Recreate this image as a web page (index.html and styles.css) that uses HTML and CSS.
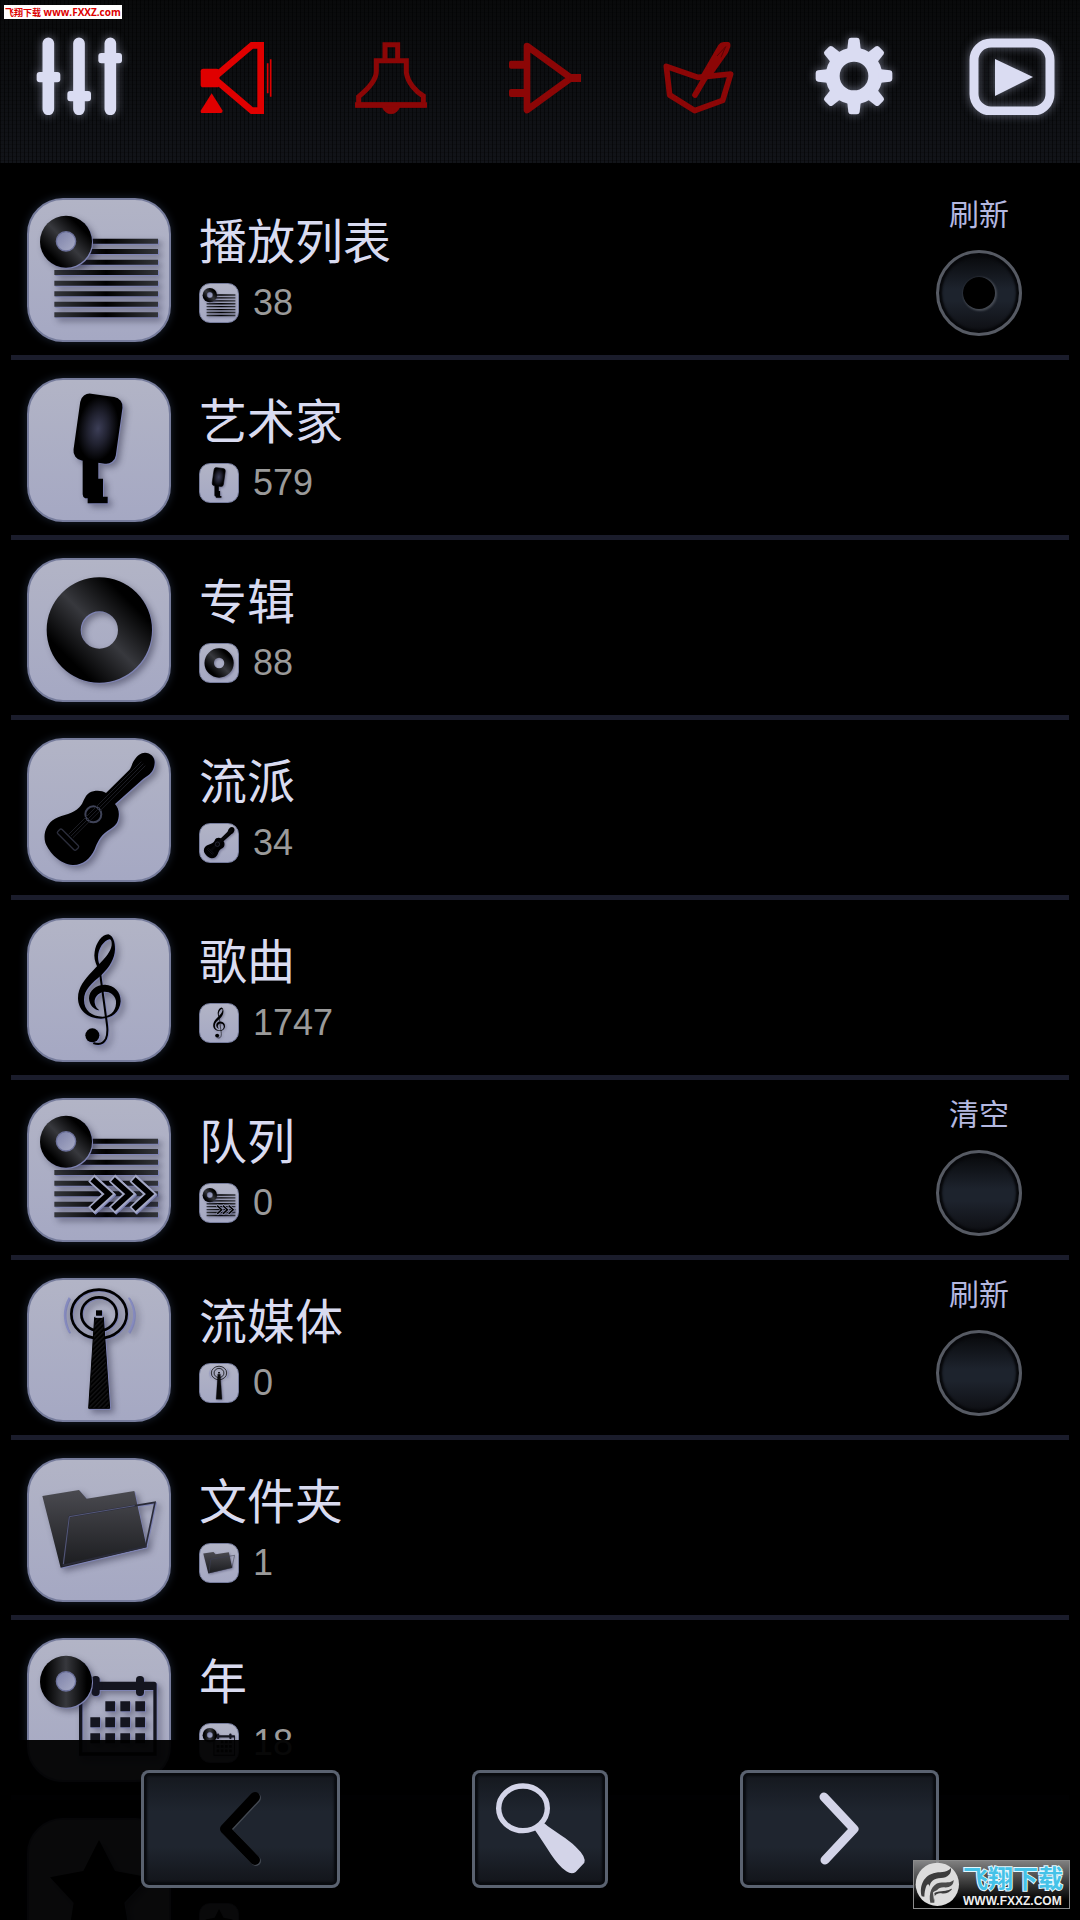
FILE: index.html
```html
<!DOCTYPE html>
<html lang="zh-CN">

<head>
    <meta charset="UTF-8">
    <meta name="viewport" content="width=device-width, initial-scale=1.0">
    <title>播放列表</title>
    <link rel="stylesheet" href="styles.css">
</head>

<body>
    <!-- Shared artwork -->
    <svg class="sprite" width="0" height="0" aria-hidden="true">
        <defs>
            <linearGradient id="vinyl" x1="0.1" y1="0.9" x2="0.9" y2="0.1">
                <stop offset="0.15" stop-color="#000" />
                <stop offset="0.5" stop-color="#37383d" />
                <stop offset="0.85" stop-color="#000" />
            </linearGradient>
            <linearGradient id="vinylYear">
                <stop offset="0.1" stop-color="#000" />
                <stop offset="0.5" stop-color="#37383d" />
                <stop offset="0.9" stop-color="#000" />
            </linearGradient>
            <linearGradient id="hole" x1="0" y1="0" x2="1" y2="1">
                <stop offset="0" stop-color="#7b80a8" />
                <stop offset="1" stop-color="#a9acc6" />
            </linearGradient>
            <linearGradient id="bar">
                <stop offset="0" stop-color="#33353a" />
                <stop offset="0.5" stop-color="#000" />
                <stop offset="1" stop-color="#33353a" />
            </linearGradient>
            <radialGradient id="micHead">
                <stop offset="0" stop-color="#3c3e57" />
                <stop offset="0.5" stop-color="#20212f" />
                <stop offset="1" stop-color="#000" />
            </radialGradient>
            <linearGradient id="folderBack" x1="0" y1="0" x2="0" y2="1">
                <stop offset="0" stop-color="#4a4a50" />
                <stop offset="1" stop-color="#1b1c1f" />
            </linearGradient>
            <pattern id="hatch" width="10" height="10" patternUnits="userSpaceOnUse" patternTransform="rotate(45)">
                <rect width="10" height="10" fill="#000" />
                <rect width="4" height="10" fill="#141416" />
            </pattern>
        </defs>

        <symbol id="lines" viewBox="81 54 432 432">
            <path fill="url(#bar)" d="M198 176h276v15H198zM198 207h276v15H198zM198 239h276v15H198zM163 270h311v15H163zM163 302h311v15H163zM163 334h311v15H163zM163 365h311v15H163zM163 397h311v15H163z" />
        </symbol>

        <symbol id="smallDisc" viewBox="81 54 432 432">
            <circle cx="198" cy="185" r="78" fill="url(#vinyl)" />
            <circle cx="198" cy="184" r="29" fill="url(#hole)" stroke="#6d729c" stroke-width="4" />
        </symbol>

        <symbol id="mic" viewBox="81 594 432 432">
            <path d="M248 830h47v66h14v54h14v20h-60v-15h-7q-8-3-8-12z" />
            <rect x="233" y="648" width="122" height="196" rx="26" fill="url(#micHead)" stroke="#000" stroke-width="6" transform="rotate(8 294 746)" />
        </symbol>

        <symbol id="disc" viewBox="81 54 432 432">
            <path fill="url(#vinyl)" fill-rule="evenodd" d="M140 270a158 158 0 1 0 316 0a158 158 0 1 0-316 0zM242 270a56 56 0 1 1 112 0a56 56 0 1 1-112 0z" />
        </symbol>

        <symbol id="guitar" viewBox="81 594 432 432">
            <path d="M435 638C452 638 465 652 464 668C463 684 458 694 447 704L430 716L345 792C355 803 359 818 355 836C351 856 338 862 322 873C300 888 292 908 284 928C270 958 248 976 218 975C180 972 148 938 136 908C128 880 140 850 165 836C190 824 220 822 238 802C252 788 252 768 268 758C284 750 304 750 318 759L384 694C396 684 394 672 403 660C412 647 422 638 435 638Z" />
            <circle cx="280" cy="823" r="24" fill="none" stroke="#3f4358" stroke-width="6" />
            <rect x="165" y="890" width="78" height="18" rx="5" fill="none" stroke="#2b2d3b" stroke-width="4" transform="rotate(45 204 899)" />
            <path d="M206 883L424 665M213 888L430 671M219 893L436 677" fill="none" stroke="#1c1d24" stroke-width="3" />
        </symbol>

        <symbol id="clef" viewBox="81 54 432 432">
            <path fill-rule="evenodd" d="M325 103C338 106 346 126 345 148C344 177 328 202 305 224C275 250 252 268 252 300C252 332 275 349 308 350C338 348 350 325 348 302C344 282 328 274 312 275C294 278 282 292 284 308C286 320 292 326 298 331C282 330 268 315 267 295C267 272 288 254 315 254C343 256 362 275 362 304C360 336 335 356 303 356C260 355 234 328 234 294C234 262 254 238 275 216L291 199C285 185 281 170 284 155C288 130 305 103 325 103ZM328 118C312 122 294 145 294 172C294 180 296 188 298 192C315 175 332 156 335 136C336 126 334 118 328 118Z" />
            <path d="M297 195L317 345C322 378 325 398 318 416C310 432 296 435 280 429" fill="none" stroke="#000" stroke-width="6" />
            <circle cx="277" cy="406" r="21" />
        </symbol>

        <symbol id="arrows" viewBox="81 54 432 432">
            <g fill="none" stroke="#a4a8c4" stroke-width="28">
                <path d="M274 294L326 342L274 391" />
                <path d="M336 294L388 342L336 391" />
                <path d="M398 294L450 342L398 391" />
            </g>
            <g fill="none" stroke="#000" stroke-width="17">
                <path d="M277 298L326 342L277 387" />
                <path d="M339 298L388 342L339 387" />
                <path d="M401 298L450 342L401 387" />
            </g>
        </symbol>

        <symbol id="antenna" viewBox="81 54 432 432">
            <g fill="none" stroke="#000" stroke-width="8">
                <ellipse cx="297" cy="162" rx="83" ry="73" />
                <ellipse cx="297" cy="162" rx="53" ry="50" />
            </g>
            <path d="M208 113Q180 165 208 217M386 113Q418 165 386 217" fill="none" stroke="#858abf" stroke-width="5" />
            <path d="M284 172h26l19 273h-63z" fill="url(#hatch)" stroke="#000" stroke-width="3" />
            <path d="M286 171h22" stroke="#a9acc6" stroke-width="5" />
            <rect x="288" y="151" width="18" height="16" />
        </symbol>

        <symbol id="folder" viewBox="81 594 432 432">
            <path d="M127 708L237 690L260 716L403 693L440 862L182 923Z" fill="url(#folderBack)" />
            <path d="M208 770L465 727L437 860L190 916Z" fill="none" stroke="#2a2b38" stroke-width="5" />
            <path d="M190 912L208 770L404 737" fill="none" stroke="#54587a" stroke-width="3" />
        </symbol>

        <symbol id="calendar" viewBox="81 54 432 432">
            <g fill="#14151f">
                <path fill-rule="evenodd" d="M245 185h217q8 0 8 8v214H237V193q0-8 8-8zM247 210v187h213V210z" />
                <rect x="275" y="168" width="24" height="60" rx="11" />
                <rect x="408" y="168" width="24" height="60" rx="11" />
                <path d="M316 244h29v30h-29zM361 244h29v30h-29zM406 244h29v30h-29zM271 292h29v30h-29zM316 292h29v30h-29zM361 292h29v30h-29zM406 292h29v30h-29zM271 340h29v30h-29zM316 340h29v30h-29zM361 340h29v30h-29zM406 340h29v30h-29z" />
            </g>
        </symbol>

        <symbol id="yearDisc" viewBox="81 54 432 432">
            <circle cx="198" cy="185" r="78" fill="url(#vinylYear)" />
            <circle cx="198" cy="184" r="29" fill="url(#hole)" stroke="#6d729c" stroke-width="4" />
        </symbol>

        <symbol id="star" viewBox="81 54 432 432">
            <path d="M297 120L345 213L445 232L373 308L390 410L297 362L205 410L221 308L150 232L250 213Z" />
        </symbol>
    </svg>

    <div class="app">
        <header class="toolbar">
            <button type="button" class="tool tool--light tool--first" aria-label="均衡器">
                <svg viewBox="108 108 258 234" width="86" height="78">
                    <path d="M145 127v198M237 127v198M331 127v198" stroke-width="35" stroke-linecap="round" />
                    <rect x="110" y="213" width="71" height="31" rx="9" />
                    <rect x="202" y="270" width="71" height="31" rx="9" />
                    <rect x="295" y="156" width="71" height="31" rx="9" />
                </svg>
            </button>
            <button type="button" class="tool tool--on" aria-label="扬声器">
                <svg viewBox="600 126 216 216" width="72" height="72">
                    <rect x="602" y="206" width="56" height="56" rx="8" />
                    <path d="M650 226L756 136H782V332H756L650 242" fill="none" stroke-width="20" />
                    <path d="M635 280L668 332Q668 339 662 339H604Q600 338 603 331Z" />
                    <path d="M803 190v90M812 178v112" stroke-width="5" />
                </svg>
            </button>
            <button type="button" class="tool tool--off" aria-label="铃声">
                <svg viewBox="1062 126 216 216" width="72" height="72">
                    <g fill="none" stroke-width="15">
                        <path d="M1152 182V134H1190V182" />
                        <path d="M1126 182H1216V218C1220 248 1246 276 1267 288V315H1073V290C1100 268 1126 240 1126 214Z" />
                        <path d="M1062 315h216" stroke-width="17" />
                    </g>
                    <path d="M1142 320h56q-10 22-28 22t-28-22z" />
                </svg>
            </button>
            <button type="button" class="tool tool--off" aria-label="放大器">
                <svg viewBox="84 66 216 216" width="72" height="72">
                    <path d="M138 78L270 174L138 270Z" fill="none" stroke-width="20" stroke-linejoin="round" />
                    <path d="M90 122h40v24H90q-6 0-6-6v-12q0-6 6-6zM90 207h40v24H90q-6 0-6-6v-12q0-6 6-6zM266 162h34v24h-34z" />
                </svg>
            </button>
            <button type="button" class="tool tool--off" aria-label="混音">
                <svg viewBox="550 66 216 216" width="72" height="72">
                    <g fill="none" stroke-width="17" stroke-linejoin="round" stroke-linecap="round">
                        <path d="M560 139L655 172L753 162L729 241L645 272L570 225Z" />
                        <path d="M646 225L732 78" />
                    </g>
                    <path d="M660 172L716 75Q722 66 732 66H746Q754 68 752 80L745 98L696 168Z" />
                    <path d="M712 108L738 80L724 112" fill="none" class="tool__groove" stroke-width="3" />
                </svg>
            </button>
            <button type="button" class="tool tool--light" aria-label="设置">
                <svg viewBox="1002 51 234 234" width="78" height="78">
                    <circle cx="1119" cy="168" r="64" fill="none" stroke-width="42" />
                    <g id="teeth">
                        <path id="tooth" d="M1098 95L1102 60Q1103 53 1110 53H1128Q1135 53 1136 60L1140 95Z" />
                        <use href="#tooth" transform="rotate(45 1119 168)" />
                        <use href="#tooth" transform="rotate(90 1119 168)" />
                        <use href="#tooth" transform="rotate(135 1119 168)" />
                    </g>
                    <use href="#teeth" transform="rotate(180 1119 168)" />
                </svg>
            </button>
            <button type="button" class="tool tool--light tool--last" aria-label="正在播放">
                <svg viewBox="0 0 86 78" width="86" height="78">
                    <rect x="5" y="6" width="76" height="68" rx="17" fill="none" stroke-width="9" />
                    <path d="M26 22L64 40L26 59Z" />
                </svg>
            </button>
        </header>

        <main class="library">
            <ul>
                <li class="row">
                    <a href="#playlists" class="row__link">
                        <span class="tile"><svg><use href="#lines" /></svg><svg><use href="#smallDisc" /></svg></span>
                        <span class="row__text">
                            <span class="row__title">播放列表</span>
                            <span class="row__meta">
                                <span class="tile tile--small"><svg><use href="#lines" /></svg><svg><use href="#smallDisc" /></svg></span>
                                <span class="row__count">38</span>
                            </span>
                        </span>
                    </a>
                    <div class="action">
                        <label for="refreshPlaylists">刷新</label>
                        <button type="button" id="refreshPlaylists" class="knob knob--lit"></button>
                    </div>
                </li>
                <li class="row">
                    <a href="#artists" class="row__link">
                        <span class="tile"><svg><use href="#mic" /></svg></span>
                        <span class="row__text">
                            <span class="row__title">艺术家</span>
                            <span class="row__meta">
                                <span class="tile tile--small"><svg><use href="#mic" /></svg></span>
                                <span class="row__count">579</span>
                            </span>
                        </span>
                    </a>
                </li>
                <li class="row">
                    <a href="#albums" class="row__link">
                        <span class="tile"><svg><use href="#disc" /></svg></span>
                        <span class="row__text">
                            <span class="row__title">专辑</span>
                            <span class="row__meta">
                                <span class="tile tile--small"><svg><use href="#disc" /></svg></span>
                                <span class="row__count">88</span>
                            </span>
                        </span>
                    </a>
                </li>
                <li class="row">
                    <a href="#genres" class="row__link">
                        <span class="tile"><svg><use href="#guitar" /></svg></span>
                        <span class="row__text">
                            <span class="row__title">流派</span>
                            <span class="row__meta">
                                <span class="tile tile--small"><svg><use href="#guitar" /></svg></span>
                                <span class="row__count">34</span>
                            </span>
                        </span>
                    </a>
                </li>
                <li class="row">
                    <a href="#songs" class="row__link">
                        <span class="tile"><svg><use href="#clef" /></svg></span>
                        <span class="row__text">
                            <span class="row__title">歌曲</span>
                            <span class="row__meta">
                                <span class="tile tile--small"><svg><use href="#clef" /></svg></span>
                                <span class="row__count">1747</span>
                            </span>
                        </span>
                    </a>
                </li>
                <li class="row">
                    <a href="#queue" class="row__link">
                        <span class="tile"><svg><use href="#lines" /></svg><svg><use href="#smallDisc" /></svg><svg><use href="#arrows" /></svg></span>
                        <span class="row__text">
                            <span class="row__title">队列</span>
                            <span class="row__meta">
                                <span class="tile tile--small"><svg><use href="#lines" /></svg><svg><use href="#smallDisc" /></svg><svg><use href="#arrows" /></svg></span>
                                <span class="row__count">0</span>
                            </span>
                        </span>
                    </a>
                    <div class="action">
                        <label for="clearQueue">清空</label>
                        <button type="button" id="clearQueue" class="knob"></button>
                    </div>
                </li>
                <li class="row">
                    <a href="#streams" class="row__link">
                        <span class="tile"><svg><use href="#antenna" /></svg></span>
                        <span class="row__text">
                            <span class="row__title">流媒体</span>
                            <span class="row__meta">
                                <span class="tile tile--small"><svg><use href="#antenna" /></svg></span>
                                <span class="row__count">0</span>
                            </span>
                        </span>
                    </a>
                    <div class="action">
                        <label for="refreshStreams">刷新</label>
                        <button type="button" id="refreshStreams" class="knob"></button>
                    </div>
                </li>
                <li class="row">
                    <a href="#folders" class="row__link">
                        <span class="tile"><svg><use href="#folder" /></svg></span>
                        <span class="row__text">
                            <span class="row__title">文件夹</span>
                            <span class="row__meta">
                                <span class="tile tile--small"><svg><use href="#folder" /></svg></span>
                                <span class="row__count">1</span>
                            </span>
                        </span>
                    </a>
                </li>
                <li class="row">
                    <a href="#years" class="row__link">
                        <span class="tile"><svg><use href="#calendar" /></svg><svg><use href="#yearDisc" /></svg></span>
                        <span class="row__text">
                            <span class="row__title">年</span>
                            <span class="row__meta">
                                <span class="tile tile--small"><svg><use href="#calendar" /></svg><svg><use href="#yearDisc" /></svg></span>
                                <span class="row__count">18</span>
                            </span>
                        </span>
                    </a>
                </li>
                <li class="row">
                    <a href="#ratings" class="row__link" aria-label="评分">
                        <span class="tile"><svg><use href="#star" /></svg></span>
                        <span class="row__text">
                            <span class="row__title"></span>
                            <span class="row__meta">
                                <span class="tile tile--small"><svg><use href="#star" /></svg></span>
                            </span>
                        </span>
                    </a>
                </li>
            </ul>
        </main>

        <nav class="pager">
            <button type="button" class="key key--wide" aria-label="上一页">
                <svg viewBox="0 0 199 118">
                    <path d="M115 28L85 60L115 91" stroke="#434952" />
                    <path d="M114 27L84 59L114 90" stroke="#000" />
                </svg>
            </button>
            <button type="button" class="key" aria-label="搜索">
                <svg viewBox="97 90 408 354">
                    <ellipse cx="250" cy="205" rx="73" ry="67" stroke="#d3d4e8" stroke-width="16" />
                    <path d="M284 268Q300 262 312 248C345 276 385 296 408 320Q440 350 434 368L408 396Q396 404 380 394C345 370 325 325 284 268Z" fill="#d3d4e8" />
                </svg>
            </button>
            <button type="button" class="key key--wide" aria-label="下一页">
                <svg viewBox="0 0 199 118">
                    <path d="M84 27L114 59L85 90" stroke="#d3d4e8" stroke-width="9" />
                </svg>
            </button>
        </nav>

        <p class="source-tag"><span class="source-tag__name">飞翔下载</span> www.FXXZ.com</p>

        <div class="badge">
            <svg viewBox="0 0 135 135" width="45" height="45" aria-hidden="true">
                <circle cx="67" cy="67" r="65" fill="#dcdcdc" />
                <path d="M20 103C12 72 26 38 62 32C82 29 96 32 108 18C110 36 98 47 78 48C56 49 46 58 44 74C40 58 30 70 28 104Z" fill="#3c3c3c" />
                <path d="M46 122C40 94 50 66 74 62C92 60 106 64 116 54C116 70 104 78 86 76C68 76 58 88 58 122Z" fill="#4a4a4a" />
                <path d="M56 92C70 80 92 92 116 74C112 92 94 98 80 96C68 94 62 100 58 108Z" fill="#3c3c3c" stroke="#dcdcdc" stroke-width="4" />
            </svg>
            <p class="badge__text">
                <span class="badge__name">飞翔下载</span>
                <span class="badge__url">WWW.FXXZ.COM</span>
            </p>
        </div>
    </div>
</body>

</html>
```
FILE: styles.css
```css
:root {
    --light: #dadcf2;
    --ink: #d9dbf0;
    --muted: #9a9a9a;
    --divider: #1a1c2b;
    --edge: #5a6270;
}

* {
    box-sizing: border-box;
}

body {
    background-color: #000;
    color: var(--ink);
    font-family: "Liberation Sans", "Noto Sans CJK SC", sans-serif;
    margin: 0;
}

button {
    background: none;
    border: 0;
    font: inherit;
    padding: 0;
}

ul {
    list-style: none;
    margin: 0;
    padding: 0;
}

p {
    margin: 0;
}

svg {
    display: block;
}

.sprite {
    position: absolute;
}

.app {
    display: flex;
    flex-direction: column;
    height: 100vh;
    overflow: hidden;
    position: relative;
}

/* Toolbar */

.toolbar {
    align-items: center;
    background:
        repeating-linear-gradient(90deg, rgba(0, 0, 0, 0.5) 0 1px, transparent 1px 4px),
        repeating-linear-gradient(rgba(0, 0, 0, 0.2) 0 1px, transparent 1px 4px),
        linear-gradient(#090a0b, #121419);
    display: flex;
    flex: none;
    height: 163px;
    padding-bottom: 12px;
}

.tool {
    display: flex;
    flex: 1;
    justify-content: center;
}

.tool svg {
    fill: currentColor;
    stroke: currentColor;
    stroke-width: 0;
}

.tool--first {
    flex: none;
    justify-content: flex-start;
    padding-left: 36px;
    width: 159px;
}

.tool--last {
    flex: none;
    justify-content: flex-end;
    padding-right: 25px;
    width: 149px;
}

.tool--light {
    color: var(--light);
    filter: drop-shadow(0 0 5px rgba(190, 195, 225, 0.5));
}

.tool--on {
    color: #e00000;
    padding-top: 4px;
}

.tool--off {
    color: #8c0606;
    padding-top: 4px;
}

.tool__groove {
    stroke: #5a0404;
}

/* Library list */

.library {
    flex: 1;
    overflow: hidden;
    padding: 17px 11px 0;
}

.row {
    border-bottom: 5px solid var(--divider);
    display: flex;
    height: 180px;
    justify-content: space-between;
}

.row__link {
    color: inherit;
    display: flex;
    flex: 1;
    gap: 28px;
    padding: 18px 0 0 16px;
    text-decoration: none;
}

.row__text {
    display: flex;
    flex-direction: column;
    gap: 12px;
    padding-top: 17px;
}

.row__title {
    font-size: 48px;
    height: 56px;
    line-height: 56px;
}

.row__meta {
    align-items: center;
    display: flex;
    gap: 14px;
}

.row__count {
    color: var(--muted);
    font-size: 36px;
    line-height: 40px;
}

.tile {
    background: linear-gradient(#b2b4c6, #a5a8c3);
    border: 2px solid #767c9c;
    border-radius: 36px;
    box-shadow: 0 0 8px rgba(70, 90, 130, 0.4);
    display: grid;
    flex: none;
    height: 144px;
    width: 144px;
}

.tile svg {
    filter: drop-shadow(1px 1px 0 #7e83b4) drop-shadow(3px 3px 3px rgba(20, 20, 45, 0.4));
    grid-area: 1 / 1;
    height: 144px;
    margin: -2px;
    width: 144px;
}

.tile--small {
    border-width: 1px;
    border-radius: 11px;
    box-shadow: none;
    height: 40px;
    width: 40px;
}

.tile--small svg {
    filter: drop-shadow(1px 1px 1px rgba(40, 40, 80, 0.4));
    height: 40px;
    margin: -1px;
    width: 40px;
}

.action {
    align-items: center;
    color: #b4b8e0;
    display: flex;
    flex-direction: column;
    font-size: 30px;
    gap: 17px;
    line-height: 36px;
    padding: 17px 47px 0 0;
}

.knob {
    background: linear-gradient(#07080a, #1d232d 45%, #1d232d 60%, #0d0e12);
    border: 3px solid #565a63;
    border-radius: 50%;
    box-shadow: inset 0 0 2px 3px #07080b;
    display: grid;
    height: 86px;
    place-items: center;
    width: 86px;
}

.knob--lit::before {
    background: #000;
    border-radius: 50%;
    box-shadow: 1px 1px 2px 1px #454a53;
    content: "";
    height: 32px;
    width: 32px;
}

/* Bottom bar, laid over the end of the list */

.pager {
    background-color: rgba(0, 0, 0, 0.95);
    bottom: 0;
    display: flex;
    gap: 132px;
    height: 180px;
    justify-content: center;
    left: 0;
    padding-top: 30px;
    position: absolute;
    right: 0;
}

.key {
    background: linear-gradient(#13161c, #1f252f 35%, #1f252f 65%, #111318);
    border-radius: 8px;
    box-shadow: inset 0 0 0 3px var(--edge), inset 0 0 2px 6px #090b0f;
    height: 118px;
    width: 136px;
}

.key--wide {
    width: 199px;
}

.key svg {
    fill: none;
    height: 100%;
    stroke-linecap: round;
    stroke-linejoin: round;
    stroke-width: 10px;
    width: 100%;
}

/* Site marks */

.source-tag {
    background-color: #fff;
    color: #d00;
    font-family: "Open Sans", "Noto Sans CJK SC", sans-serif;
    font-size: 10px;
    font-weight: 700;
    height: 14px;
    left: 4px;
    line-height: 14px;
    padding: 0 1px;
    position: absolute;
    top: 5px;
    white-space: nowrap;
}

.source-tag__name {
    font-size: 9px;
}

.badge {
    align-items: center;
    background: linear-gradient(rgba(150, 150, 150, 0.85), rgba(0, 0, 0, 0.85) 85%);
    border: 1px solid #8b8b8b;
    bottom: 11px;
    display: flex;
    gap: 3px;
    height: 49px;
    padding: 0 1px;
    position: absolute;
    right: 10px;
    width: 157px;
}

.badge__text {
    display: flex;
    flex-direction: column;
    font-weight: 700;
}

.badge__name {
    color: #45c2e8;
    font-size: 25px;
    line-height: 32px;
    -webkit-text-stroke: 2px #e4f8ff;
    paint-order: stroke fill;
}

.badge__url {
    color: #f0f0f0;
    font-size: 12px;
    line-height: 12px;
}
```
